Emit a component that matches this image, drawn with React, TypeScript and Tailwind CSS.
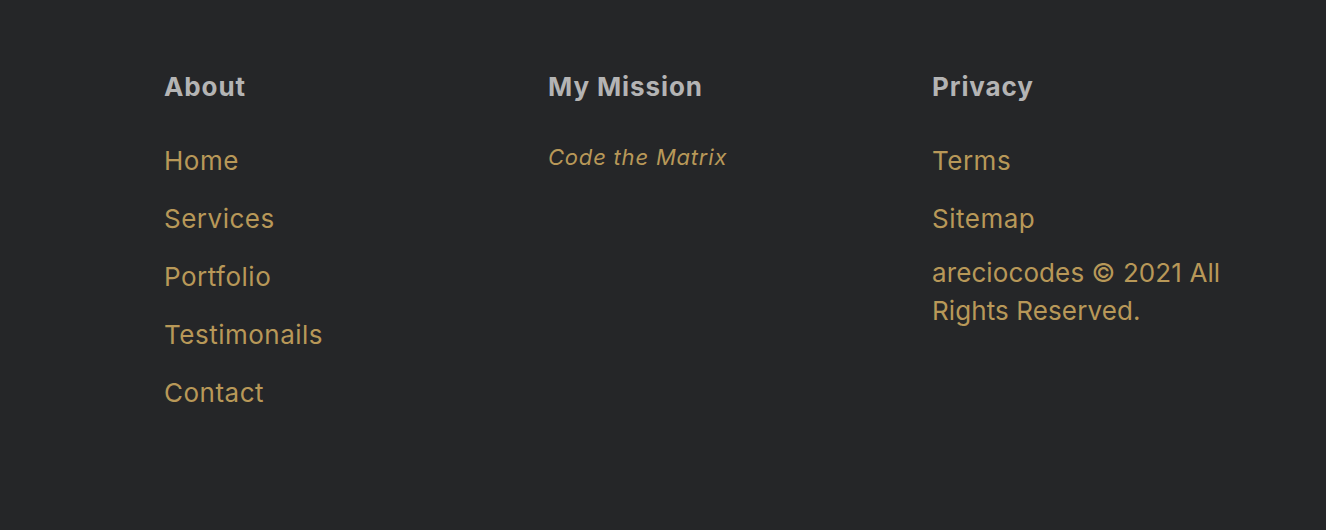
import React from 'react';

const about = ['Home', 'Services', 'Portfolio', 'Testimonails', 'Contact'];

const App: React.FC = () => {
  return (
    <div className="min-h-[530px] w-full bg-[#252628] font-['Inter',sans-serif]">
      <footer className="flex pl-[164px] pt-[71px]">
        {/* About */}
        <div className="w-[384px]">
          <h3 className="text-[26px] font-bold leading-[32px] tracking-[0.9px] text-[#b4b4b4]">About</h3>
          <ul className="mt-[40px] flex flex-col gap-[22px]">
            {about.map(item => (
              <li key={item} className="text-[26px] leading-[36px] tracking-[0.5px] text-[#b89858]">{item}</li>
            ))}
          </ul>
        </div>

        {/* Mission */}
        <div className="w-[384px]">
          <h3 className="text-[26px] font-bold leading-[32px] tracking-[0.9px] text-[#b4b4b4]">My Mission</h3>
          <p className="mt-[40px] text-[22px] italic leading-[28px] tracking-[0.8px] text-[#b89858]">Code the Matrix</p>
        </div>

        {/* Privacy */}
        <div className="w-[300px]">
          <h3 className="text-[26px] font-bold leading-[32px] tracking-[0.9px] text-[#b4b4b4]">Privacy</h3>
          <ul className="mt-[40px] flex flex-col gap-[22px]">
            <li className="text-[26px] leading-[36px] tracking-[0.5px] text-[#b89858]">Terms</li>
            <li className="text-[26px] leading-[36px] tracking-[0.5px] text-[#b89858]">Sitemap</li>
          </ul>
          <p className="mt-[17px] text-[26px] leading-[38px] tracking-[0.1px] text-[#b89858]">areciocodes © 2021 All Rights Reserved.</p>
        </div>
      </footer>
    </div>
  );
};

export default App;
